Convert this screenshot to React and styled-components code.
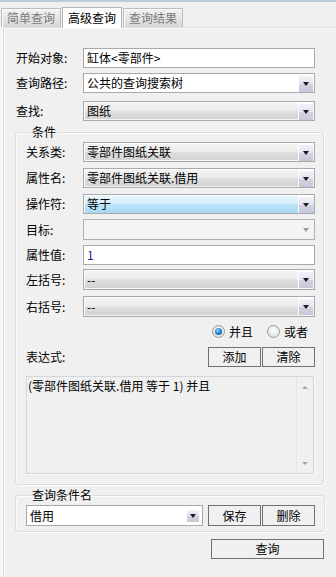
import React from "react";
import styled, { createGlobalStyle, css } from "styled-components";

const GlobalStyle = createGlobalStyle`
  html, body {
    margin: 0;
    padding: 0;
    background: #f0f0f0;
  }
  body {
    font-family: "Noto Sans CJK SC", "Noto Sans", sans-serif;
    font-size: 12px;
    color: #000;
  }
  * { box-sizing: border-box; }
`;

const Window = styled.div`
  width: 336px;
  height: 577px;
  overflow: hidden;
  background: #f0f0f0;
  border-top: 1px solid #b6cbe6;
  display: flex;
  flex-direction: column;
`;

const TabBar = styled.div`
  height: 26px;
  border-top: 1px solid #c9c9c9;
  display: flex;
  align-items: flex-end;
  padding-left: 1px;
  gap: 1px;
`;

const Tab = styled.div`
  width: 60px;
  height: 19px;
  display: flex;
  align-items: center;
  justify-content: center;
  line-height: 14px;
  color: #7a7a7a;
  border: 1px solid #bcbcbc;
  border-bottom: none;
  box-shadow: inset 1px 1px #fbfbfb;
  background: linear-gradient(#f3f3f3, #e4e4e4 55%, #d6d6d6);
  ${(p) =>
    p.$active &&
    css`
      color: #000;
      background: #fff;
      border-color: #b4b4b4;
      box-shadow: none;
      position: relative;
      z-index: 1;
      margin-bottom: -1px;
      height: 21px;
    `}
`;

const Panel = styled.div`
  flex: 1;
  margin-left: 3px;
  border-left: 1px solid #d7dae2;
  border-top: 1px solid #dcdfe8;
  box-shadow: inset 1px 1px #fafafa, -3px 0 #f7f7fb;
  padding: 20px 0 0 12px;
`;

const Row = styled.div`
  display: flex;
  align-items: center;
  height: ${(p) => p.$h || 20}px;
  margin-top: ${(p) => p.$mt || 0}px;
`;

const Label = styled.div`
  width: ${(p) => p.$w}px;
  flex: none;
  line-height: 14px;
  white-space: nowrap;
`;

const Box = styled.div`
  position: relative;
  width: ${(p) => p.$w || 232}px;
  height: 100%;
  border: 1px solid #a9a9a9;
  display: flex;
  align-items: center;
  padding-left: 3px;
  line-height: 14px;
  white-space: nowrap;
  background: #fff;
  color: ${(p) => p.$color || "#000"};
  ${(p) =>
    p.$variant === "list" &&
    css`
      box-shadow: inset 1px 1px #fcfcfc, inset -1px -1px #f4f4f4;
      background: linear-gradient(#f3f3f3, #ececec 45%, #dedede 55%, #d1d1d1);
    `}
  ${(p) =>
    p.$variant === "focus" &&
    css`
      box-shadow: inset 1px 1px #fcfeff;
      background: linear-gradient(#eaf6fd, #d8effc 45%, #bde5fb 55%, #a6d8f3);
    `}
  ${(p) =>
    p.$variant === "disabled" &&
    css`
      background: #f4f4f4;
      border-color: #b0b0b0;
    `}
`;

const Arrow = styled.span`
  margin-left: auto;
  margin-right: ${(p) => (p.$small ? 3 : 1)}px;
  width: ${(p) => (p.$small ? 13 : 15)}px;
  height: ${(p) => (p.$small ? 13 : 17)}px;
  flex: none;
  display: flex;
  align-items: center;
  justify-content: center;
  background: ${(p) =>
    p.$flat ? "transparent" : "linear-gradient(#f4f4f9, #e2e3ee 50%, #d2d3e2 51%, #c6c8da)"};
  box-shadow: ${(p) => (p.$flat ? "none" : "inset 1px 1px #fff")};
  &::after {
    content: "";
    border-left: 3px solid transparent;
    border-right: 3px solid transparent;
    border-top: 4px solid ${(p) => (p.$flat ? "#9c9c9c" : "#1a1a1a")};
    margin-top: 1px;
  }
`;

const Group = styled.fieldset`
  margin: ${(p) => p.$mt}px 0 0 -1px;
  width: ${(p) => p.$w}px;
  padding: ${(p) => p.$pad};
  border: 1px solid #d5dfe5;
  border-radius: 3px;
  box-shadow: inset 1px 1px #fdfdfd, 1px 1px #fdfdfd;
  min-width: 0;
`;

const Legend = styled.legend`
  margin-left: 5px;
  padding: 0 1px;
  line-height: 14px;
`;

const RadioRow = styled.div`
  display: flex;
  justify-content: flex-end;
  align-items: center;
  height: 13px;
  margin-top: 8px;
  padding-right: 15px;
  gap: 14px;
`;

const RadioItem = styled.label`
  display: flex;
  align-items: center;
  gap: 4px;
  line-height: 14px;
`;

const RadioDot = styled.span`
  width: 13px;
  height: 13px;
  border-radius: 50%;
  border: 1px solid #9a9a9a;
  background: radial-gradient(circle at 50% 40%, #fdfdfd, #e4e4e4 70%, #d6d6d6);
  display: flex;
  align-items: center;
  justify-content: center;
  ${(p) =>
    p.$checked &&
    css`
      &::after {
        content: "";
        width: 7px;
        height: 7px;
        border-radius: 50%;
        background: radial-gradient(circle at 40% 35%, #8bd3ff, #1c78c7 55%, #0c4f93);
      }
    `}
`;

const Buttons = styled.div`
  margin-left: auto;
  display: flex;
  gap: 1px;
  height: 100%;
  margin-right: ${(p) => p.$mr || 0}px;
`;

const Button = styled.div`
  width: ${(p) => p.$w || 53}px;
  height: 100%;
  border: 1px solid #707070;
  background: #f0f0f0;
  display: flex;
  align-items: center;
  justify-content: center;
  line-height: 14px;
`;

const TextArea = styled.div`
  margin-top: 9px;
  width: 288px;
  height: 98px;
  border: 1px solid #d3d6da;
  box-shadow: 1px 1px #fbfbfb;
  background: #f0f0f0;
  display: flex;
`;

const AreaText = styled.div`
  flex: 1;
  padding: 2px 0 0 1px;
  line-height: 14px;
  white-space: nowrap;
`;

const ScrollBar = styled.div`
  width: 17px;
  border-left: 1px solid #e4e4e4;
  display: flex;
  flex-direction: column;
  justify-content: space-between;
  align-items: center;
  padding: 9px 0 8px;
`;

const ScrollArrow = styled.span`
  border-left: 3px solid transparent;
  border-right: 3px solid transparent;
  ${(p) =>
    p.$up
      ? css`border-bottom: 3px solid #a6a6a6;`
      : css`border-top: 3px solid #a6a6a6;`}
`;

const BottomRow = styled.div`
  display: flex;
  justify-content: flex-end;
  width: 308px;
  height: 20px;
  margin-top: 7px;
`;

export default function App() {
  return (
    <Window>
      <GlobalStyle />
      <TabBar>
        <Tab>简单查询</Tab>
        <Tab $active>高级查询</Tab>
        <Tab>查询结果</Tab>
      </TabBar>
      <Panel>
        <Row>
          <Label $w={67}>开始对象:</Label>
          <Box>缸体&lt;零部件&gt;</Box>
        </Row>
        <Row $mt={5}>
          <Label $w={67}>查询路径:</Label>
          <Box>
            公共的查询搜索树
            <Arrow />
          </Box>
        </Row>
        <Row $mt={8}>
          <Label $w={67}>查找:</Label>
          <Box $variant="list">
            图纸
            <Arrow />
          </Box>
        </Row>

        <Group $mt={4} $w={309} $pad="3px 0 10px 10px">
          <Legend>条件</Legend>
          <Row>
            <Label $w={57}>关系类:</Label>
            <Box $variant="list">
              零部件图纸关联
              <Arrow />
            </Box>
          </Row>
          <Row $mt={6}>
            <Label $w={57}>属性名:</Label>
            <Box $variant="list">
              零部件图纸关联.借用
              <Arrow />
            </Box>
          </Row>
          <Row $mt={6}>
            <Label $w={57}>操作符:</Label>
            <Box $variant="focus">
              等于
              <Arrow />
            </Box>
          </Row>
          <Row $mt={5} $h={21}>
            <Label $w={57}>目标:</Label>
            <Box $variant="disabled">
              <Arrow $flat />
            </Box>
          </Row>
          <Row $mt={5}>
            <Label $w={57}>属性值:</Label>
            <Box $color="#1b1b8a">1</Box>
          </Row>
          <Row $mt={4} $h={21}>
            <Label $w={57}>左括号:</Label>
            <Box $variant="list">
              --
              <Arrow />
            </Box>
          </Row>
          <Row $mt={6} $h={21}>
            <Label $w={57}>右括号:</Label>
            <Box $variant="list">
              --
              <Arrow />
            </Box>
          </Row>

          <RadioRow>
            <RadioItem>
              <RadioDot $checked />
              并且
            </RadioItem>
            <RadioItem>
              <RadioDot />
              或者
            </RadioItem>
          </RadioRow>

          <Row $mt={9}>
            <Label $w={60}>表达式:</Label>
            <Buttons $mr={8}>
              <Button>添加</Button>
              <Button>清除</Button>
            </Buttons>
          </Row>

          <TextArea>
            <AreaText>(零部件图纸关联.借用 等于 1) 并且</AreaText>
            <ScrollBar>
              <ScrollArrow $up />
              <ScrollArrow />
            </ScrollBar>
          </TextArea>
        </Group>

        <Group $mt={3} $w={310} $pad="3px 0 5px 10px">
          <Legend>查询条件名</Legend>
          <Row $h={21}>
            <Box $w={177}>
              借用
              <Arrow $small />
            </Box>
            <Buttons $mr={9}>
              <Button>保存</Button>
              <Button>删除</Button>
            </Buttons>
          </Row>
        </Group>

        <BottomRow>
          <Button $w={113}>查询</Button>
        </BottomRow>
      </Panel>
    </Window>
  );
}
